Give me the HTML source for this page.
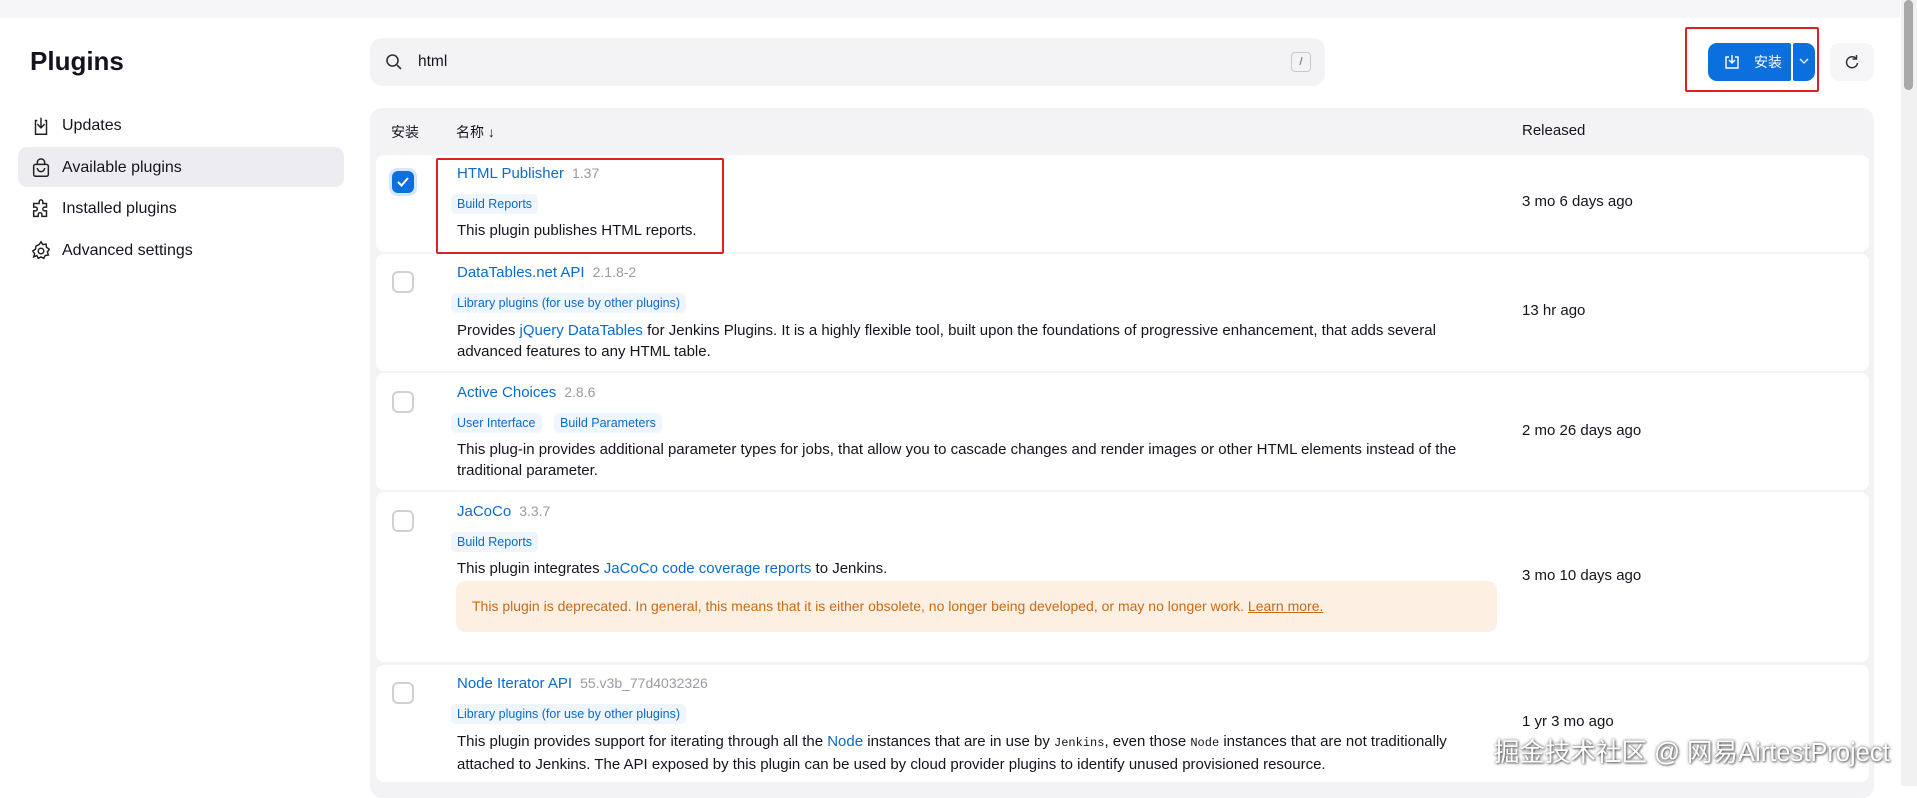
<!DOCTYPE html>
<html><head><meta charset="utf-8"><style>
*{box-sizing:border-box;margin:0;padding:0}
body{width:1917px;height:786px;overflow:hidden;background:#fff;font-family:"Liberation Sans","Noto Sans CJK SC",sans-serif;color:#14141f;position:relative;font-size:15px}
.a{position:absolute;white-space:nowrap}
.top{left:0;top:0;width:1900px;height:18px;background:#f6f6f8}
.side{left:30px;font-size:16px;display:flex;align-items:center;gap:10px}
.side svg{width:22px;height:22px}
.link{color:#0b6bcb}
.ver{color:#9a9aa3;margin-left:8px;font-size:14px}
.tag{background:#eef5fd;color:#0b6bcb;font-size:12.5px;padding:3px 6px;border-radius:5px}
.row{left:376px;width:1493px;background:#fff;border-radius:8px}
.cb{left:392px;width:22px;height:22px;border:2px solid #d0d0d6;border-radius:6px;background:#fff}
.rel{left:1522px;font-size:15px}
.desc{left:457px;line-height:21px;white-space:normal;width:1020px}
</style></head><body>
<div class="a top"></div>
<div class="a" style="left:30px;top:46px;font-size:26px;font-weight:bold">Plugins</div>
<div class="a" style="left:18px;top:147px;width:326px;height:40px;background:#ededf1;border-radius:9px"></div>
<div class="a side" style="top:115px"><svg viewBox="0 0 24 24" fill="none" stroke="#222" stroke-width="1.6"><path d="M8 6H6v15h12V6h-2M12 3v11M8 10l4 4 4-4"/></svg>Updates</div>
<div class="a side" style="top:157px"><svg viewBox="0 0 24 24" fill="none" stroke="#222" stroke-width="1.6"><rect x="4" y="8" width="16" height="13" rx="2"/><path d="M8 8V6a4 4 0 0 1 8 0v2M8 12a4 4 0 0 0 8 0"/></svg>Available plugins</div>
<div class="a side" style="top:198px"><svg viewBox="0 0 24 24" fill="none" stroke="#222" stroke-width="1.6"><path d="M10 4a2 2 0 0 1 4 0v2h4v4h-2a2 2 0 0 0 0 4h2v6h-5v-2a2 2 0 0 0-4 0v2H4v-6h2a2 2 0 0 0 0-4H4V6h6z"/></svg>Installed plugins</div>
<div class="a side" style="top:240px"><svg viewBox="0 0 24 24" fill="none" stroke="#222" stroke-width="1.6"><circle cx="12" cy="12" r="3"/><path d="M12 2l2 3 3.5-.5.5 3.5 3 2-2 3 1 3.4-3.5.6-1.5 3-3-1.5-3 1.5-1.5-3L4 18.4 5 15l-2-3 3-2 .5-3.5L10 5z"/></svg>Advanced settings</div>

<div class="a" style="left:370px;top:38px;width:955px;height:48px;background:#f3f3f6;border-radius:12px"></div>
<svg class="a" style="left:384px;top:52px" width="20" height="20" viewBox="0 0 20 20" fill="none" stroke="#333" stroke-width="1.6"><circle cx="8.5" cy="8.5" r="5.5"/><path d="M13 13l4 4"/></svg>
<div class="a" style="left:418px;top:53px;font-size:15.5px">html</div>
<div class="a" style="left:1291px;top:52px;width:20px;height:20px;border:1px solid #c8c8ce;border-radius:4px;font-size:11px;text-align:center;line-height:18px;color:#555">/</div>

<div class="a" style="left:1685px;top:27px;width:134px;height:65px;border:2px solid #e02020;border-radius:2px"></div>
<div class="a" style="left:1708px;top:43px;width:83px;height:38px;background:#0b6fde;border-radius:9px 2px 2px 9px;color:#fff;font-size:14px;display:flex;align-items:center;gap:14px;padding-left:16px"><svg width="16" height="16" viewBox="0 0 16 16" fill="none" stroke="#fff" stroke-width="1.4"><path d="M5 3H2v11h12V3h-3M8 1v8M5 6l3 3 3-3"/></svg>安装</div>
<div class="a" style="left:1793px;top:43px;width:22px;height:38px;background:#0b6fde;border-radius:2px 9px 9px 2px"></div>
<svg class="a" style="left:1799px;top:57px" width="10" height="8" viewBox="0 0 10 8" fill="none" stroke="#fff" stroke-width="1.3"><path d="M1 2l4 4 4-4"/></svg>
<div class="a" style="left:1830px;top:43px;width:44px;height:38px;background:#f6f6f8;border-radius:9px"></div>
<svg class="a" style="left:1843px;top:53px" width="18" height="18" viewBox="0 0 18 18" fill="none" stroke="#333" stroke-width="1.5"><path d="M13.5 6A5.5 5.5 0 1 0 14.5 10M13.5 2v4h-4"/></svg>

<div class="a" style="left:370px;top:108px;width:1504px;height:690px;background:#f3f3f6;border-radius:12px"></div>
<div class="a" style="left:391px;top:122px;font-size:14px">安装</div>
<div class="a" style="left:456px;top:122px;font-size:14px">名称 ↓</div>
<div class="a" style="left:1522px;top:122px;font-size:15px">Released</div>

<div class="a row" style="top:155px;height:97px"></div>
<div class="a row" style="top:254px;height:117px"></div>
<div class="a row" style="top:373px;height:117px"></div>
<div class="a row" style="top:492px;height:170px"></div>
<div class="a row" style="top:665px;height:117px"></div>

<div class="a" style="left:389px;top:168px;width:28px;height:28px;background:#d7e7fb;border-radius:8px"></div>
<div class="a" style="left:392px;top:171px;width:22px;height:22px;background:#0b6fde;border-radius:6px"></div>
<svg class="a" style="left:396px;top:176px" width="14" height="12" viewBox="0 0 14 12" fill="none" stroke="#fff" stroke-width="2"><path d="M2 6l3.5 3.5L12 2"/></svg>
<div class="a link" style="left:457px;top:165px">HTML Publisher<span class="ver">1.37</span></div>
<div class="a tag" style="left:451px;top:194px">Build Reports</div>
<div class="a" style="left:457px;top:222px">This plugin publishes HTML reports.</div>
<div class="a rel" style="top:193px">3 mo 6 days ago</div>
<div class="a" style="left:436px;top:158px;width:288px;height:96px;border:2px solid #e02020;border-radius:2px"></div>

<div class="a cb" style="top:271px"></div>
<div class="a link" style="left:457px;top:264px">DataTables.net API<span class="ver">2.1.8-2</span></div>
<div class="a tag" style="left:451px;top:293px">Library plugins (for use by other plugins)</div>
<div class="a desc" style="top:320px">Provides <span class="link">jQuery DataTables</span> for Jenkins Plugins. It is a highly flexible tool, built upon the foundations of progressive enhancement, that adds several advanced features to any HTML table.</div>
<div class="a rel" style="top:302px">13 hr ago</div>

<div class="a cb" style="top:391px"></div>
<div class="a link" style="left:457px;top:384px">Active Choices<span class="ver">2.8.6</span></div>
<div class="a tag" style="left:451px;top:413px">User Interface</div>
<div class="a tag" style="left:554px;top:413px">Build Parameters</div>
<div class="a desc" style="top:439px">This plug-in provides additional parameter types for jobs, that allow you to cascade changes and render images or other HTML elements instead of the traditional parameter.</div>
<div class="a rel" style="top:422px">2 mo 26 days ago</div>

<div class="a cb" style="top:510px"></div>
<div class="a link" style="left:457px;top:503px">JaCoCo<span class="ver">3.3.7</span></div>
<div class="a tag" style="left:451px;top:532px">Build Reports</div>
<div class="a" style="left:457px;top:560px">This plugin integrates <span class="link">JaCoCo code coverage reports</span> to Jenkins.</div>
<div class="a" style="left:456px;top:581px;width:1041px;height:51px;background:#fdf0e3;border-radius:9px;color:#c96a12;font-size:14px;padding:17px 0 0 16px">This plugin is deprecated. In general, this means that it is either obsolete, no longer being developed, or may no longer work. <u>Learn more.</u></div>
<div class="a rel" style="top:567px">3 mo 10 days ago</div>

<div class="a cb" style="top:682px"></div>
<div class="a link" style="left:457px;top:675px">Node Iterator API<span class="ver">55.v3b_77d4032326</span></div>
<div class="a tag" style="left:451px;top:704px">Library plugins (for use by other plugins)</div>
<div class="a desc" style="top:731px;width:1030px">This plugin provides support for iterating through all the <span class="link">Node</span> instances that are in use by <span style="font-family:'Liberation Mono',monospace;font-size:12px">Jenkins</span>, even those <span style="font-family:'Liberation Mono',monospace;font-size:12px">Node</span> instances that are not traditionally attached to Jenkins. The API exposed by this plugin can be used by cloud provider plugins to identify unused provisioned resource.</div>
<div class="a rel" style="top:713px">1 yr 3 mo ago</div>

<div class="a" style="left:1494px;top:732px;font-size:25.5px;color:#fff;text-shadow:0 0 3px rgba(0,0,0,.6),1px 1px 2px rgba(0,0,0,.5)">掘金技术社区 @ 网易AirtestProject</div>

<div class="a" style="left:1901px;top:0;width:16px;height:786px;background:#f1f1f1"></div>
<div class="a" style="left:1904px;top:0;width:9px;height:90px;background:#a8a8a8;border-radius:5px"></div>
</body></html>
